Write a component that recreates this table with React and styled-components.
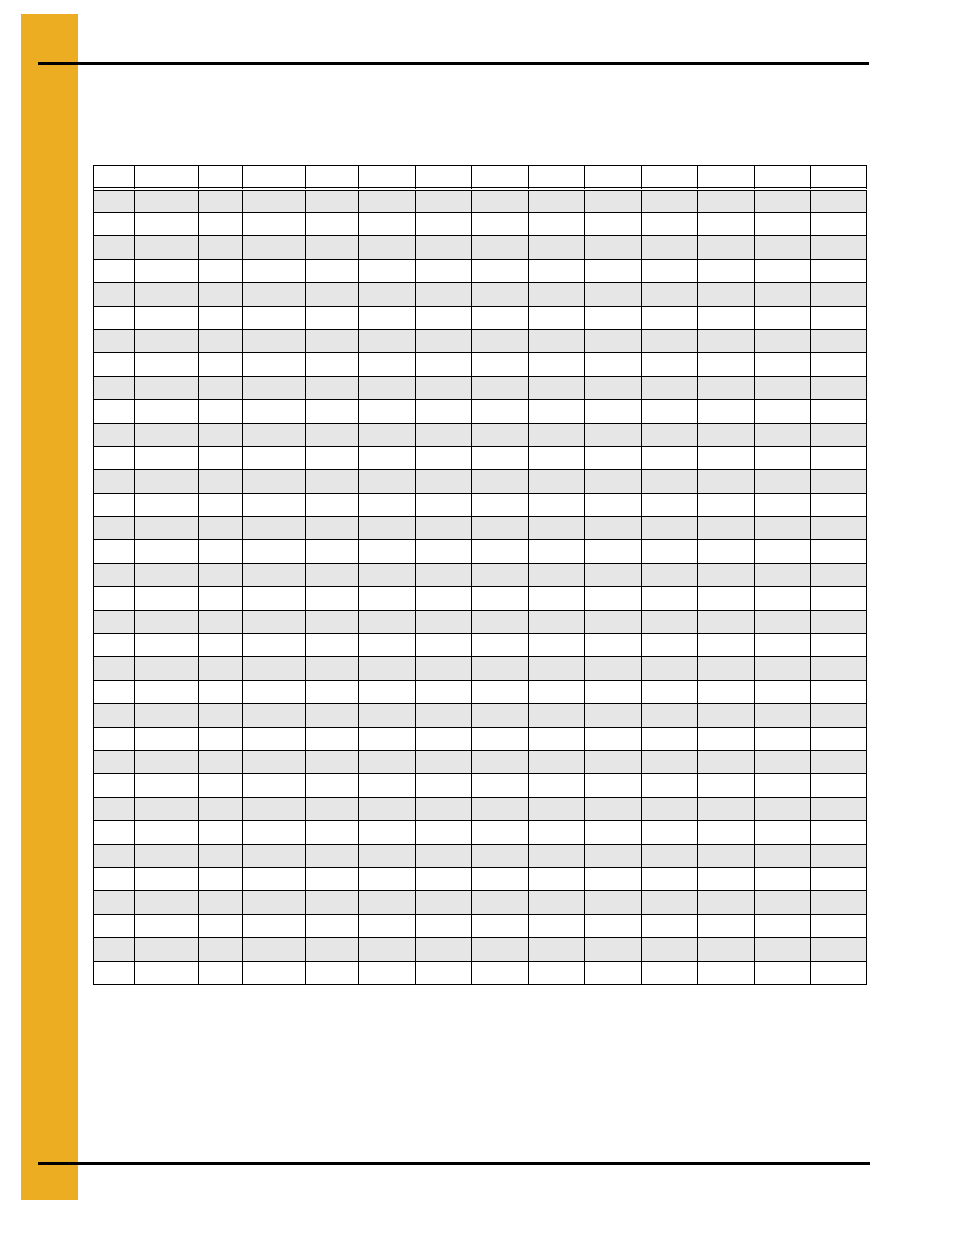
import styled, { createGlobalStyle } from 'styled-components';

const COLUMN_WIDTHS = [41, 64, 44, 63, 53, 57, 56, 57, 56, 57, 56, 57, 56, 56];
const ROW_COUNT = 34;

const GlobalStyle = createGlobalStyle`
  html, body {
    margin: 0;
    padding: 0;
    background: #ffffff;
  }

  body {
    font-family: "Liberation Sans", Arial, sans-serif;
  }
`;

const Page = styled.div`
  width: 954px;
  height: 1235px;
  display: grid;
  grid-template-columns: 21px 17px 40px 15px 774px 2px 1px 1fr;
  grid-template-rows: 14px 48px 3px 100px auto 177px 3px 35px 1fr;
  background: #ffffff;
`;

const SideBand = styled.div`
  grid-column: 2 / 4;
  grid-row: 2 / 9;
  background: #ecad22;
`;

const Rule = styled.div`
  grid-column: ${({ $wide }) => ($wide ? '3 / 8' : '3 / 7')};
  grid-row: ${({ $row }) => $row};
  background: #000000;
`;

const Sheet = styled.div`
  grid-column: 5;
  grid-row: 5;
  display: grid;
  grid-template-columns: ${COLUMN_WIDTHS.map((w) => `${w}px`).join(' ')};
  grid-template-rows: 25px 22px repeat(${ROW_COUNT - 1}, 23.394px);
  border-left: 1px solid #000000;
  border-top: 1px solid #000000;
`;

const Cell = styled.div`
  box-sizing: border-box;
  border-right: 1px solid #000000;
  border-bottom: 1px solid #000000;
  background: ${({ $shaded }) => ($shaded ? '#e6e6e6' : '#ffffff')};
`;

const HeadCell = styled(Cell)`
  border-bottom: 4px double #000000;
`;

const App = () => {
  const rows = Array.from({ length: ROW_COUNT }, (_, i) => i);

  return (
    <>
      <GlobalStyle />
      <Page>
        <SideBand />
        <Rule $row={3} />
        <Sheet>
          {COLUMN_WIDTHS.map((_, c) => (
            <HeadCell key={`h-${c}`} />
          ))}
          {rows.map((r) =>
            COLUMN_WIDTHS.map((_, c) => (
              <Cell key={`${r}-${c}`} $shaded={r % 2 === 0} />
            ))
          )}
        </Sheet>
        <Rule $row={7} $wide />
      </Page>
    </>
  );
};

export default App;
